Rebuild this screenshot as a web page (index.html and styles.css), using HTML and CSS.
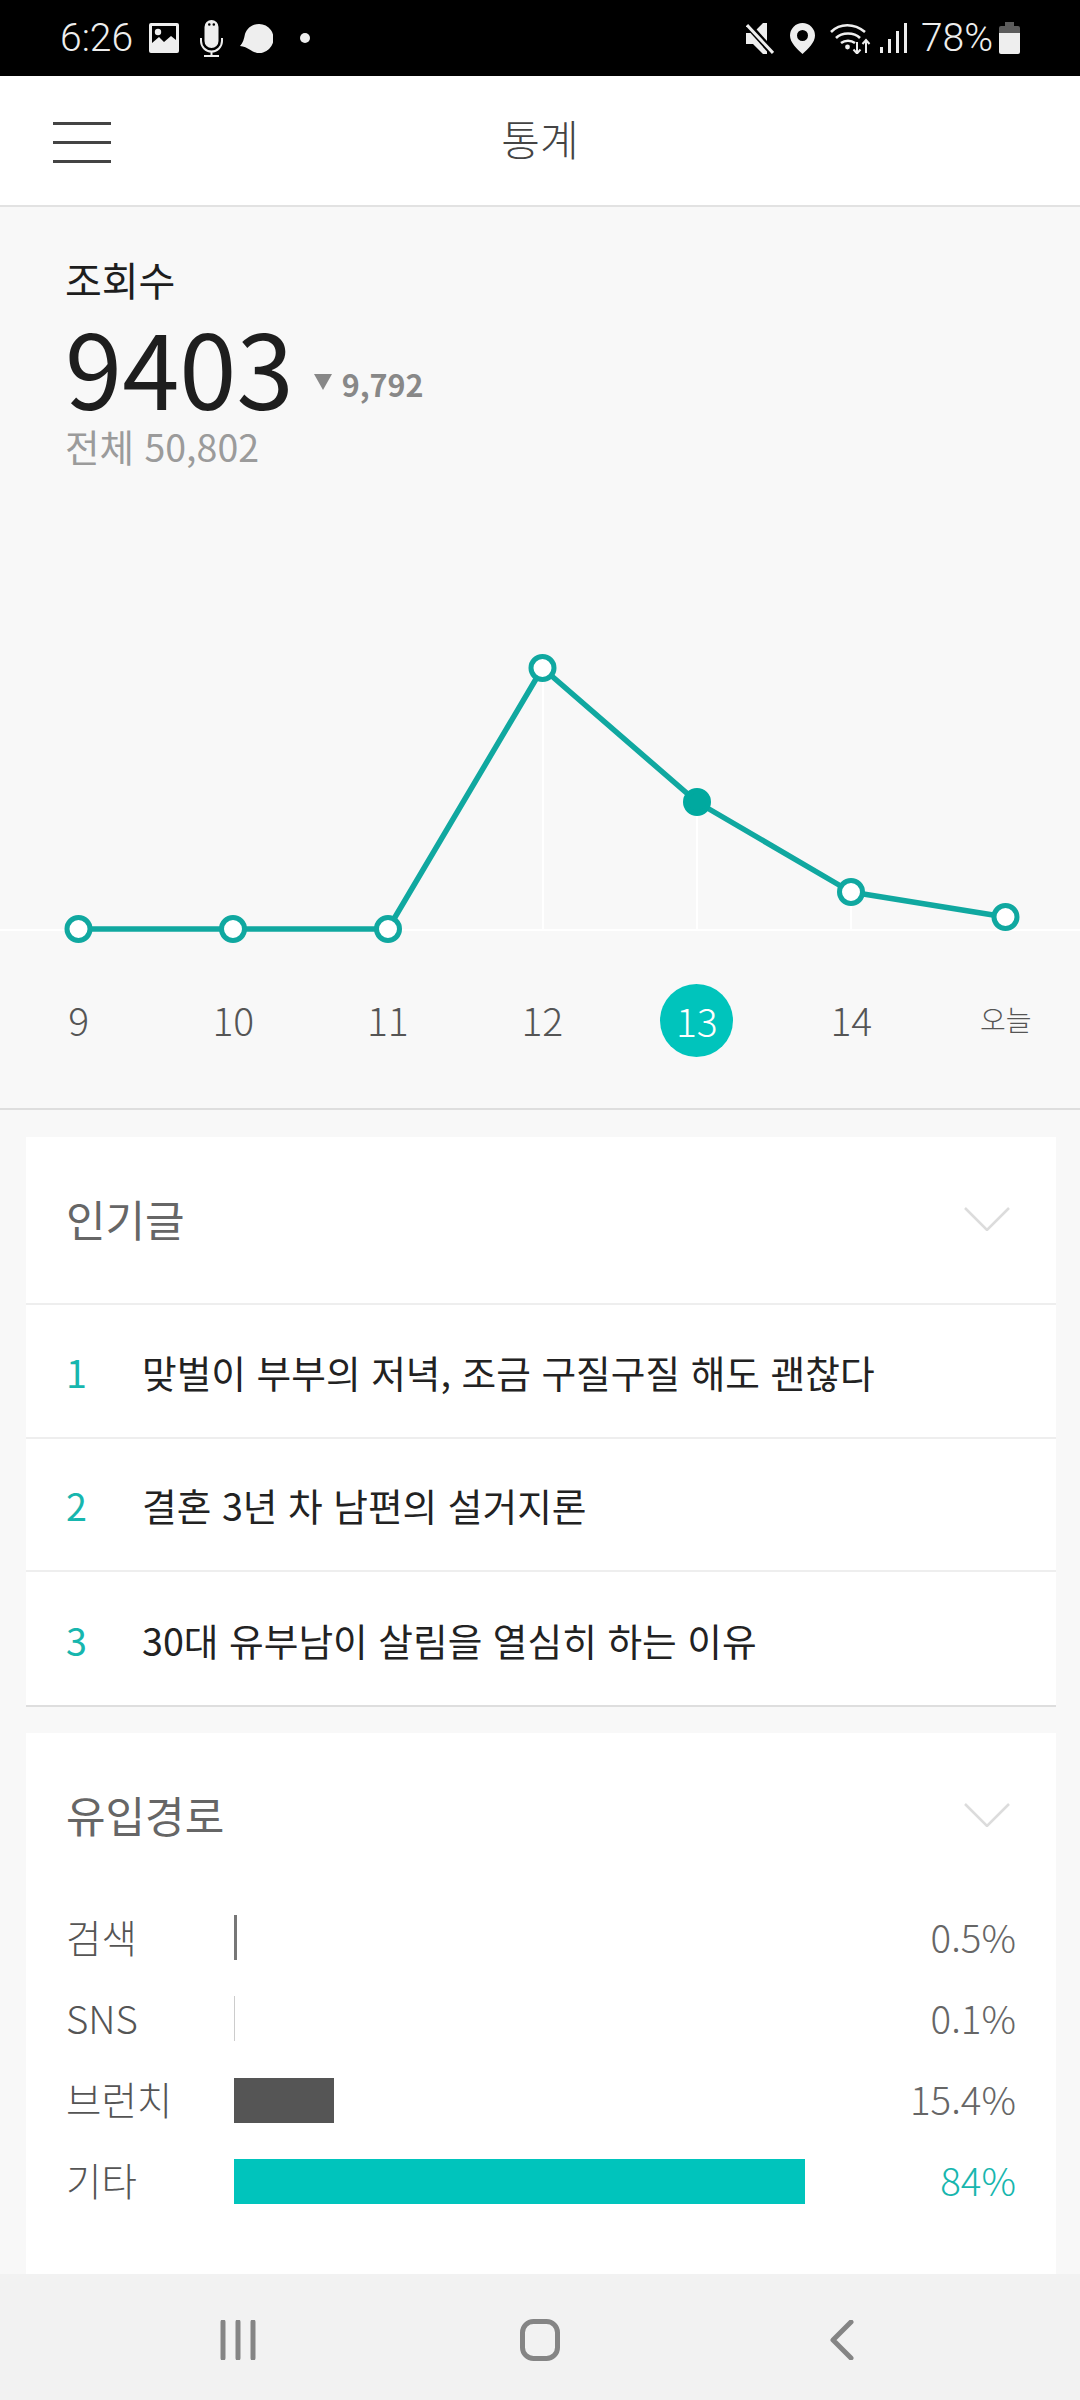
FILE: index.html
```html
<!DOCTYPE html>
<html lang="ko">
<head>
<meta charset="utf-8">
<title>통계</title>
<link rel="stylesheet" href="styles.css">
</head>
<body>
<div class="statusbar">
  <div class="status-left">
    <span class="status-text">6:26</span>
    <svg class="ico-image" width="30" height="30" viewBox="0 0 30 30"><path fill="#eee" fill-rule="evenodd" d="M2 0h26a2 2 0 0 1 2 2v26a2 2 0 0 1-2 2H2a2 2 0 0 1-2-2V2a2 2 0 0 1 2-2zM3 3v17l7-6 5 5 7-6 5 4V3z"/><circle cx="9" cy="9" r="3.2" fill="#eee"/></svg>
    <svg class="ico-mic" width="23" height="37" viewBox="0 0 23 37"><path fill="#eee" fill-rule="evenodd" d="M11.500 0a7 7 0 0 1 7 7v14a7 7 0 0 1-14 0V7a7 7 0 0 1 7-7zM8 4.500a1.300 1.300 0 1 0 2.600 0 1.300 1.300 0 0 0-2.600 0zM12.500 4.500a1.300 1.300 0 1 0 2.600 0 1.300 1.300 0 0 0-2.600 0z"/><path fill="none" stroke="#eee" stroke-width="2" d="M1 18v3a10.500 10.500 0 0 0 21 0v-3M11.500 31.500V36M4 36h15"/></svg>
    <svg class="ico-bubble" width="33" height="29" viewBox="0 0 33 29"><path fill="#eee" d="M19 0a14.500 14.500 0 1 1-9 25.800C7 24 4 22.400 0 22c3-3 4-7 5-12C7 4 12.500 0 19 0z"/></svg>
    <span class="status-dot"></span>
  </div>
  <div class="status-right">
    <svg class="ico-mute" width="28" height="31" viewBox="0 0 28 31"><path fill="#eee" d="M0 10h7l10-10h4v31h-4L7 21H0z"/><path stroke="#000" stroke-width="7" d="M1 1l27 30"/><path stroke="#eee" stroke-width="3" d="M1 2l26 28"/></svg>
    <svg class="ico-pin" width="25" height="31" viewBox="0 0 25 31"><path fill="#eee" fill-rule="evenodd" d="M12.500 0A12.500 12.500 0 0 1 25 12.500C25 19.500 18 26 12.500 31 7 26 0 19.500 0 12.500A12.500 12.500 0 0 1 12.500 0zm0 7a5.500 5.500 0 1 0 0 11 5.500 5.500 0 0 0 0-11z"/></svg>
    <svg class="ico-wifi" width="41" height="31" viewBox="0 0 41 31"><path fill="none" stroke="#eee" stroke-width="2.600" d="M1 9C10 0 24 0 35 9M6 15c6-6 18-6 24 0M11 20c4-3 10-3 14 0"/><circle cx="17.500" cy="24" r="2.400" fill="#eee"/><path fill="none" stroke="#eee" stroke-width="2" d="M27 19v11M23.500 26.500l3.500 4 3.500-4M36 30V17M32.500 21l3.500-4 3.500 4"/></svg>
    <svg class="ico-signal" width="27" height="30" viewBox="0 0 27 30"><path fill="#eee" d="M0 24h3v6H0zM8 16h3v14H8zM16 8h3v22h-3zM24 0h3v30h-3z"/></svg>
    <span class="status-text">78%</span>
    <svg class="ico-battery" width="21" height="32" viewBox="0 0 21 32"><path fill="#5c5c5c" d="M6 0h9v4h4a2 2 0 0 1 2 2v5H0V6a2 2 0 0 1 2-2h4z"/><path fill="#eee" d="M0 11h21v19a2 2 0 0 1-2 2H2a2 2 0 0 1-2-2z"/></svg>
  </div>
</div>

<header class="topbar">
  <div class="menu"><span></span><span></span><span></span></div>
  <h1 class="title">통계</h1>
</header>

<main class="content">
  <section class="stats">
    <div class="summary">
      <div class="summary-label">조회수</div>
      <div class="summary-main">
        <span class="summary-num">9403</span>
        <span class="summary-tri"></span>
        <span class="summary-diff">9,792</span>
      </div>
      <div class="summary-total">전체 50,802</div>
    </div>
    <svg class="chart" width="1080" height="340" viewBox="0 640 1080 340">
      <path class="grid" d="M0 930H1080M543 668V930M697 802V930M851 892V930"/>
      <polyline class="line" points="78.500,929 233,929 388,929 542.500,668 697,802 851,892 1005.500,917"/>
      <circle class="pt" cx="78.500" cy="929" r="11.500"/>
      <circle class="pt" cx="233" cy="929" r="11.500"/>
      <circle class="pt" cx="388" cy="929" r="11.500"/>
      <circle class="pt" cx="542.500" cy="668" r="11.500"/>
      <circle class="pt on" cx="697" cy="802" r="11.500"/>
      <circle class="pt" cx="851" cy="892" r="11.500"/>
      <circle class="pt" cx="1005.500" cy="917" r="11.500"/>
    </svg>
    <div class="axis">
      <span>9</span><span>10</span><span>11</span><span>12</span><span class="axis-on"><b>13</b></span><span>14</span><span class="axis-today">오늘</span>
    </div>
  </section>

  <section class="card">
    <div class="card-head">
      <h2>인기글</h2>
      <svg class="chev" width="46" height="24" viewBox="0 0 46 24"><path d="M1 1l22 22L45 1"/></svg>
    </div>
    <ol class="posts">
      <li><span class="rank">1</span><span>맞벌이 부부의 저녁, 조금 구질구질 해도 괜찮다</span></li>
      <li><span class="rank">2</span><span>결혼 3년 차 남편의 설거지론</span></li>
      <li><span class="rank">3</span><span>30대 유부남이 살림을 열심히 하는 이유</span></li>
    </ol>
  </section>

  <section class="card card-last">
    <div class="card-head card-head-flat">
      <h2>유입경로</h2>
      <svg class="chev" width="46" height="24" viewBox="0 0 46 24"><path d="M1 1l22 22L45 1"/></svg>
    </div>
    <div class="bars">
      <div class="bar-row"><span>검색</span><div class="bar grey" style="width:3px"></div><span class="val">0.5%</span></div>
      <div class="bar-row"><span>SNS</span><div class="bar lite" style="width:1px"></div><span class="val">0.1%</span></div>
      <div class="bar-row"><span>브런치</span><div class="bar dark" style="width:100px"></div><span class="val">15.4%</span></div>
      <div class="bar-row"><span>기타</span><div class="bar teal" style="width:571px"></div><span class="val val-on">84%</span></div>
    </div>
  </section>
</main>

<nav class="navbar">
  <svg width="36" height="40" viewBox="0 0 36 40"><path d="M3 2v36M18 2v36M33 2v36"/></svg>
  <svg width="40" height="42" viewBox="0 0 40 42"><rect x="2.500" y="2.500" width="35" height="37" rx="11"/></svg>
  <svg width="24" height="40" viewBox="0 0 24 40"><path d="M21 2 3 20l18 18"/></svg>
</nav>
</body>
</html>
```
FILE: styles.css
```css
* { box-sizing: border-box; }
html, body { margin: 0; padding: 0; }
body {
  width: 1080px;
  height: 2400px;
  display: flex;
  flex-direction: column;
  overflow: hidden;
  background: #f8f8f8;
  font-family: "Noto Sans CJK KR", "Noto Sans", sans-serif;
  color: #1e1e1e;
}
h1, h2 { margin: 0; font-weight: inherit; font-size: inherit; }

.statusbar {
  flex: 0 0 76px;
  background: #000;
  display: flex;
  justify-content: space-between;
  align-items: center;
  padding: 0 60px;
}
.status-left, .status-right { display: flex; align-items: center; }
.status-text { font-family: Roboto, sans-serif; font-size: 39px; font-weight: 300; color: #eee; line-height: 76px; }
.status-left svg, .status-right svg { display: block; flex: none; }
.ico-image { margin-left: 16px; }
.ico-mic { margin-left: 21px; }
.ico-bubble { margin-left: 17px; }
.status-dot { width: 10px; height: 10px; border-radius: 50%; background: #eee; margin-left: 27px; }
.ico-pin { margin-left: 16px; }
.ico-wifi { margin-left: 15px; }
.ico-signal { margin-left: 9px; }
.status-right .status-text { margin-left: 14px; }
.ico-battery { margin-left: 6px; }

.topbar {
  flex: 0 0 131px;
  background: #fff;
  border-bottom: 2px solid #e2e2e2;
  display: flex;
  align-items: center;
  justify-content: center;
  position: relative;
  padding-bottom: 6px;
}
.menu {
  position: absolute;
  left: 53px;
  top: 46px;
  width: 58px;
  display: flex;
  flex-direction: column;
  gap: 16px;
}
.menu span { display: block; height: 3px; background: #444; }
.title { font-size: 42px; font-weight: 200; color: #444; line-height: 1; }

.content { flex: 1 1 auto; min-height: 0; overflow: hidden; background: #f8f8f8; }

.stats { border-bottom: 2px solid #dedede; height: 903px; display: flex; flex-direction: column; }
.summary { padding: 48px 0 0 65px; height: 433px; }
.summary-label { font-size: 40px; line-height: 48px; color: #1e1e1e; }
.summary-main { display: flex; align-items: center; height: 104px; margin-top: 11px; }
.summary-num { font-size: 103px; font-weight: 400; line-height: 104px; color: #1e1e1e; }
.summary-tri {
  width: 0;
  height: 0;
  margin: 32px 0 0 20px;
  border-left: 9px solid transparent;
  border-right: 9px solid transparent;
  border-top: 16px solid #888;
}
.summary-diff { font-size: 30.500px; font-weight: 700; color: #888; margin: 36px 0 0 10px; }
.summary-total { font-size: 37.500px; line-height: 48px; color: #9b9b9b; font-weight: 400; margin-top: 4px; }

.chart { display: block; flex: none; }
.grid { fill: none; stroke: #fff; stroke-width: 2; }
.line { fill: none; stroke: #10a8a0; stroke-width: 5.500; stroke-linejoin: round; }
.pt { fill: #fff; stroke: #10a8a0; stroke-width: 5; }
.pt.on { fill: #00a99f; stroke: #00a99f; }

.axis {
  display: grid;
  grid-template-columns: repeat(7, 154.500px);
  padding-left: 1.500px;
  margin-top: 3px;
  height: 74px;
  align-items: center;
  justify-items: center;
  font-size: 39px;
  font-weight: 300;
  color: #555;
}
.axis > span:not(.axis-on) { margin-top: -2px; }
.axis-on b {
  display: flex;
  width: 73px;
  height: 73px;
  border-radius: 50%;
  background: #00c4bc;
  color: #fff;
  font-weight: 300;
  align-items: center;
  justify-content: center;
}
.axis-today { font-size: 28px; }

.card { background: #fff; margin: 27px 24px 0 26px; border-bottom: 2px solid #dedede; }
.card-last { border-bottom: 0; height: 700px; margin-top: 26px; }
.card-head {
  height: 168px;
  padding: 0 46px 2px 40px;
  display: flex;
  align-items: center;
  justify-content: space-between;
  border-bottom: 2px solid #eee;
  font-size: 43px;
  font-weight: 400;
  color: #666;
}
.card-head h2 { margin-top: -3px; }
.card-head-flat { border-bottom: 0; height: 166px; }
.chev { display: block; }
.chev path { fill: none; stroke: #dcdcdc; stroke-width: 2.500; }

.posts { list-style: none; margin: 0; padding: 0; }
.posts li {
  height: 133.500px;
  display: flex;
  align-items: center;
  padding: 1px 0 0 40px;
  font-size: 37.700px;
  color: #222;
  border-bottom: 2px solid #eee;
}
.posts li:last-child { border-bottom: 0; height: 133px; }
.rank { width: 76px; color: #17b6ae; font-weight: 400; flex: none; }

.bars { padding: 16px 40px 0; display: flex; flex-direction: column; gap: 36.330px; }
.bar-row {
  display: grid;
  grid-template-columns: 168px 1fr auto;
  align-items: center;
  height: 45px;
  line-height: 45px;
  font-size: 38.500px;
  font-weight: 300;
  color: #555;
}
.bar-row span { margin-top: -3px; }
.bar { height: 45px; }
.grey { background: #777; }
.lite { background: #ccc; }
.dark { background: #555; }
.teal { background: #00c4bc; }
.val { color: #666; }
.val-on { color: #17b6ae; }

.navbar {
  flex: 0 0 126px;
  background: #f2f2f2;
  display: grid;
  grid-template-columns: repeat(3, 302px);
  padding: 6px 87px 0;
  align-items: center;
  justify-items: center;
  position: relative;
}
.navbar svg { display: block; }
.navbar path, .navbar rect { fill: none; stroke: #858585; stroke-width: 5; stroke-linecap: round; stroke-linejoin: round; }
```
